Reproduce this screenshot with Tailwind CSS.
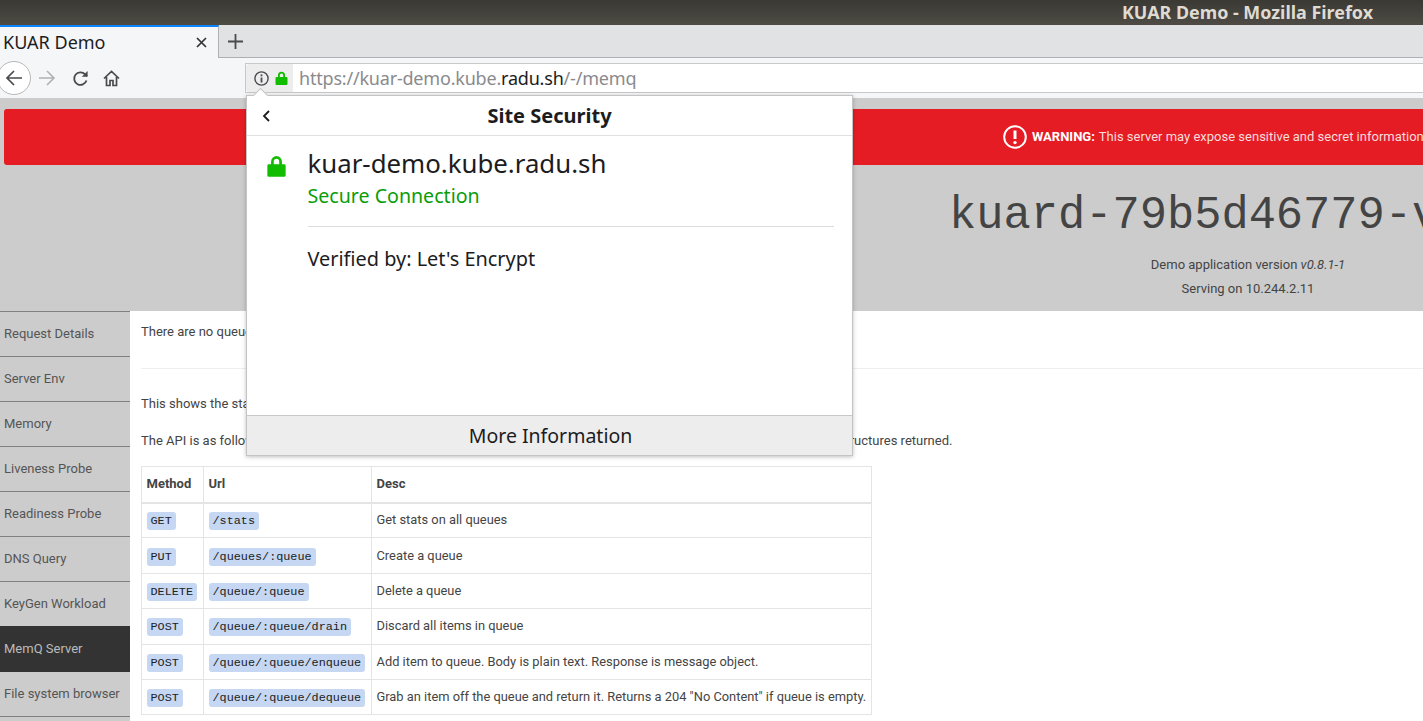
<!DOCTYPE html>
<html lang="en">
  <head>
    <script src="https://cdn.jsdelivr.net/npm/@tailwindcss/browser@4"></script>
    <meta charset="UTF-8" />
    <title>KUAR Demo - Mozilla Firefox</title>
  </head>
  <body class="relative h-[721px] w-[1423px] overflow-hidden bg-white font-['Roboto',sans-serif]">
    <!-- window title -->
    <div class="flex h-[25px] justify-end bg-gradient-to-b from-[#3a3934] to-[#4d4b44] pr-[50px] font-['Noto_Sans',sans-serif] text-[17.9px] leading-[24px] font-bold text-[#dfdbd2]">
      KUAR Demo - Mozilla Firefox
    </div>

    <!-- tab strip -->
    <div class="flex h-[33px] border-b border-[#aeb0b3] bg-[#e1e2e4]">
      <div class="-mb-px flex w-[219px] items-center justify-between border-t-2 border-r border-t-[#0a84ff] border-r-[#aeb0b3] bg-[#f5f6f8] pr-[11px] pl-[3px] font-['Noto_Sans',sans-serif] text-[18px] text-[#1c1c1e]">
        <span>KUAR Demo</span>
        <svg class="h-[11px] w-[11px]" viewBox="0 0 11 11" fill="none" stroke="#333" stroke-width="1.7"><path d="M1 1l9 9M10 1l-9 9" /></svg>
      </div>
      <div class="flex w-[33px] items-center justify-center">
        <svg class="h-[15px] w-[15px]" viewBox="0 0 15 15" fill="none" stroke="#4a4a4f" stroke-width="1.8"><path d="M7.5 0v15M0 7.5h15" /></svg>
      </div>
    </div>

    <!-- nav toolbar -->
    <div class="flex h-[40px] items-center bg-[#f5f6f8]">
      <div class="-ml-[3px] flex h-[34px] w-[34px] shrink-0 items-center justify-center rounded-full border border-[#b8b8b8] bg-white">
        <svg class="h-[18px] w-[18px]" viewBox="0 0 18 18" fill="none" stroke="#4a4a4f" stroke-width="1.7"><path d="M17 9H2M9 2L2 9l7 7" /></svg>
      </div>
      <svg class="ml-[7px] h-[18px] w-[18px]" viewBox="0 0 18 18" fill="none" stroke="#b1b1b3" stroke-width="1.6"><path d="M1 9h15M9 2l7 7-7 7" /></svg>
      <svg class="ml-[16px] h-[17px] w-[17px]" viewBox="0 0 17 17" fill="none" stroke="#4a4a4f" stroke-width="1.8"><path d="M14.5 10.5a6.3 6.3 0 1 1-1.4-6.2L15 6.2" /><path d="M15.6 1v5.8H9.8" fill="#4a4a4f" stroke="none" /></svg>
      <svg class="ml-[14px] h-[17px] w-[17px]" viewBox="0 0 17 17" fill="none" stroke="#4a4a4f" stroke-width="1.7"><path d="M1 8.5L8.5 1.5 16 8.5M3.5 7v8.5h3.5v-5h3v5h3.5V7" /></svg>
      <div class="ml-[125px] flex h-[30px] flex-1 border border-r-0 border-[#c8c8c8] bg-white">
        <div class="flex w-[47px] shrink-0 items-center gap-[6px] rounded-l-[3px] bg-[#ededee] pl-[8px]">
          <svg class="h-[15px] w-[15px]" viewBox="0 0 15 15" fill="none" stroke="#4a4a4f" stroke-width="1.4"><circle cx="7.5" cy="7.5" r="6.6" /><path d="M7.5 6.5v5" stroke-width="1.8" /><path d="M7.5 3.4v1.9" stroke-width="1.8" /></svg>
          <svg class="h-[14px] w-[13px]" viewBox="0 0 13 14" fill="#12bc00"><path d="M3 6V4.3a3.5 3.5 0 0 1 7 0V6h1.5a1 1 0 0 1 1 1v6a1 1 0 0 1-1 1h-10a1 1 0 0 1-1-1V7a1 1 0 0 1 1-1zm1.8 0h3.4V4.3a1.7 1.7 0 0 0-3.4 0z" /></svg>
        </div>
        <div class="pl-[6px] font-['Noto_Sans',sans-serif] text-[18px] leading-[28px] tracking-[-0.2px] text-[#8a8a8e]">https://kuar-demo.kube.<span class="text-[#1c1c1e]">radu.sh</span>/-/memq</div>
      </div>
    </div>

    <!-- page, scrolled sideways so only its left half fits -->
    <div class="h-[623px] w-[2496px] bg-[#cccccc]">
      <div class="px-[4px] pt-[11px]">
        <div class="flex h-[56px] items-center rounded-[3px] bg-[#e61c24] pl-[999px] text-[13px] text-[#f7dcdc]">
          <svg class="mr-[5px] h-[24px] w-[24px]" viewBox="0 0 24 24" fill="none" stroke="#fff" stroke-width="2"><circle cx="12" cy="12" r="10.8" /><path d="M12 5.5v8.5" stroke-width="3" /><circle cx="12" cy="17.6" r="1.7" fill="#fff" stroke="none" /></svg>
          <b class="mr-[4px] font-bold text-white">WARNING:</b> This server may expose sensitive and secret information
        </div>
      </div>
      <div class="h-[146px] text-center text-[13px] text-[#444]">
        <div class="pt-[25px] pl-[949px] text-left font-['Liberation_Mono',monospace] text-[45.4px] leading-[52px] whitespace-nowrap text-[#444]">kuard-79b5d46779-v</div>
        <p class="mt-[11px] leading-[24px]">Demo application version <i>v0.8.1-1</i></p>
        <p class="leading-[24px]">Serving on 10.244.2.11</p>
      </div>
      <div class="flex">
        <nav class="w-[130px] shrink-0 text-[13px] text-[#555]">
          <a class="block h-[45px] border-t border-[#808080] pl-[4px] leading-[44px]">Request Details</a>
          <a class="block h-[45px] border-t border-[#808080] pl-[4px] leading-[44px]">Server Env</a>
          <a class="block h-[45px] border-t border-[#808080] pl-[4px] leading-[44px]">Memory</a>
          <a class="block h-[45px] border-t border-[#808080] pl-[4px] leading-[44px]">Liveness Probe</a>
          <a class="block h-[45px] border-t border-[#808080] pl-[4px] leading-[44px]">Readiness Probe</a>
          <a class="block h-[45px] border-t border-[#808080] pl-[4px] leading-[44px]">DNS Query</a>
          <a class="block h-[45px] border-t border-[#808080] pl-[4px] leading-[44px]">KeyGen Workload</a>
          <a class="block h-[45px] border-t border-[#333] bg-[#333] pl-[4px] leading-[44px] text-[#bbb]">MemQ Server</a>
          <a class="block h-[45px] border-t border-[#333] pl-[4px] leading-[44px]">File system browser</a>
          <a class="block h-[10px] border-t border-[#808080]"></a>
        </nav>
        <main class="flex-1 bg-white pt-[11px] pl-[11px] text-[13px] leading-[20px] text-[#444]">
          <p>There are no queues.</p>
          <hr class="mt-[26px] border-[#eee]" />
          <p class="mt-[25px]">This shows the state of the queue server.</p>
          <p class="mt-[17px]">The API is as follows. All URLs are relative to the server root paths. See pkg/memq/types.go for the details of all the data structures returned.</p>
          <table class="mt-[15px] w-[731px] table-fixed border-collapse text-left text-[13px] leading-[20px]">
            <colgroup><col class="w-[62px]" /><col class="w-[168px]" /><col /></colgroup>
            <thead>
              <tr class="h-[36px] border-b-2 border-[#e4e4e4]">
                <th class="border border-[#e4e4e4] px-[4.5px] font-bold">Method</th>
                <th class="border border-[#e4e4e4] px-[4.5px] font-bold">Url</th>
                <th class="border border-[#e4e4e4] px-[4.5px] font-bold">Desc</th>
              </tr>
            </thead>
            <tbody class="text-[12.87px] [&_code]:inline-block [&_code]:h-[18px] [&_code]:rounded-[3px] [&_code]:bg-[#c5d7f2] [&_code]:px-[4px] [&_code]:font-['Liberation_Mono',monospace] [&_code]:text-[11.8px] [&_code]:leading-[18px] [&_code]:text-[#222] [&_td]:border [&_td]:border-[#e4e4e4] [&_td]:px-[4.5px] [&_td]:whitespace-nowrap [&_tr]:h-[35.4px]">
              <tr><td><code>GET</code></td><td><code>/stats</code></td><td>Get stats on all queues</td></tr>
              <tr><td><code>PUT</code></td><td><code>/queues/:queue</code></td><td>Create a queue</td></tr>
              <tr><td><code>DELETE</code></td><td><code>/queue/:queue</code></td><td>Delete a queue</td></tr>
              <tr><td><code>POST</code></td><td><code>/queue/:queue/drain</code></td><td>Discard all items in queue</td></tr>
              <tr><td><code>POST</code></td><td><code>/queue/:queue/enqueue</code></td><td>Add item to queue. Body is plain text. Response is message object.</td></tr>
              <tr><td><code>POST</code></td><td><code>/queue/:queue/dequeue</code></td><td>Grab an item off the queue and return it. Returns a 204 "No Content" if queue is empty.</td></tr>
            </tbody>
          </table>
        </main>
      </div>
    </div>

    <!-- site security popup -->
    <div class="absolute top-[95px] left-[246px] flex h-[361px] w-[607px] flex-col border border-[#c4c4c4] bg-white font-['Noto_Sans',sans-serif] text-[#1c1c1e] shadow-[0_1px_4px_rgba(0,0,0,0.25)]">
      <div class="absolute -top-[6px] left-[8px] h-[11px] w-[11px] rotate-45 border-t border-l border-[#c4c4c4] bg-white"></div>
      <div class="relative flex h-[40px] shrink-0 items-center justify-center border-b border-[#e0e0e0] text-[20px] font-bold">
        <svg class="absolute top-[14px] left-[15px] h-[12px] w-[8px]" viewBox="0 0 8 12" fill="none" stroke="#1c1c1e" stroke-width="1.8"><path d="M7 1L2 6l5 5" /></svg>
        Site Security
      </div>
      <div class="flex flex-1 pt-[13px] pr-[18px]">
        <svg class="mt-[6px] ml-[20px] h-[22px] w-[19px] shrink-0" viewBox="0 0 21 24" fill="#12bc00"><path d="M4.5 10V7a6 6 0 0 1 12 0v3h2.5a1.6 1.6 0 0 1 1.6 1.6v10.8A1.6 1.6 0 0 1 19 24H2a1.6 1.6 0 0 1-1.6-1.6V11.6A1.6 1.6 0 0 1 2 10zm3 0h6V7a3 3 0 0 0-6 0z" /></svg>
        <div class="ml-[21.5px] flex-1">
          <div class="text-[25.8px] leading-[28px]">kuar-demo.kube.radu.sh</div>
          <div class="mt-[6px] text-[19.6px] leading-[26px] text-[#0a9d0a]">Secure Connection</div>
          <div class="mt-[17px] border-t border-[#dcdcdc] pt-[19px] text-[19.9px] leading-[26px]">Verified by: Let's Encrypt</div>
        </div>
      </div>
      <div class="flex h-[40px] shrink-0 items-center justify-center border-t border-[#c8c8c8] bg-[#ededed] pl-[2px] text-[19.5px]">More Information</div>
    </div>
  </body>
</html>
